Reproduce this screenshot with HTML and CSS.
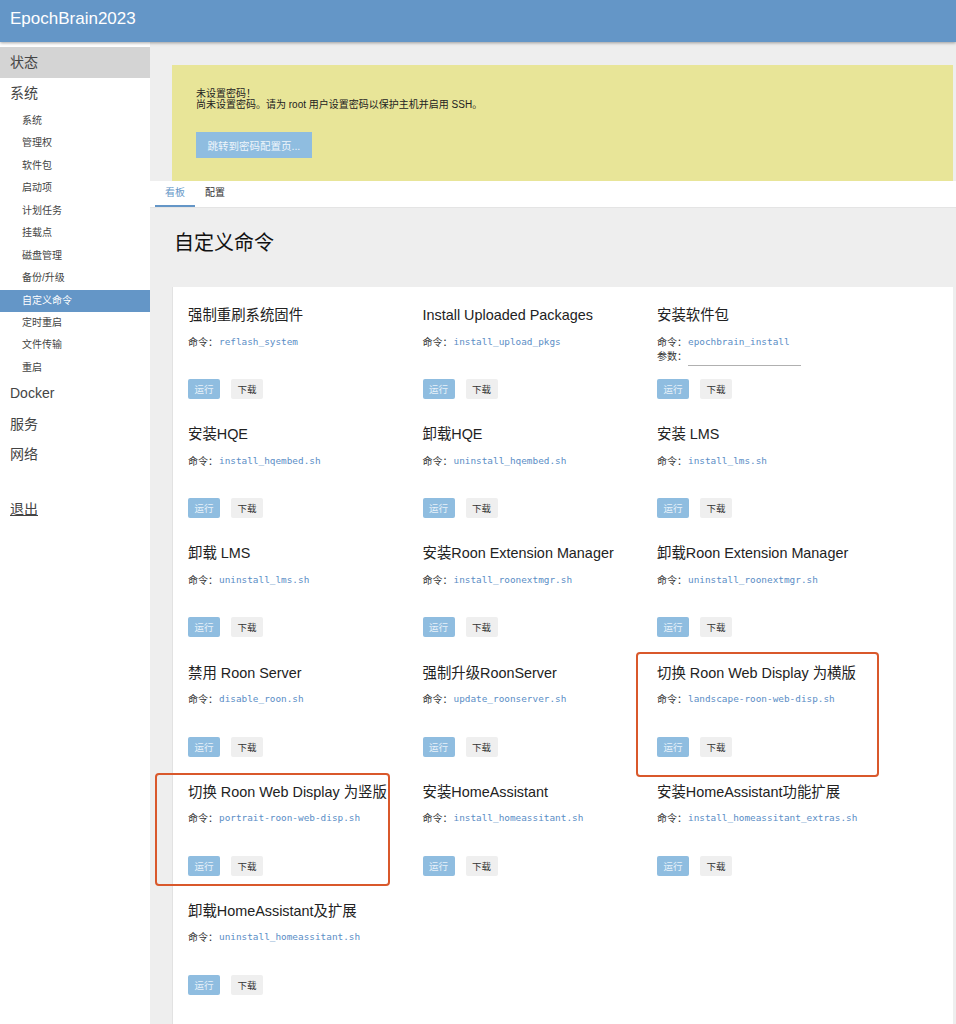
FILE: index.html
```html
<!DOCTYPE html>
<html lang="zh-CN">
<head>
    <meta charset="UTF-8">
    <meta name="viewport" content="width=device-width, initial-scale=1.0">
    <title>自定义命令 - EpochBrain2023</title>
    <link rel="stylesheet" href="styles.css">
</head>
<body>

    <header class="topbar">
        <span class="brand">EpochBrain2023</span>
    </header>

    <div class="layout">
        <nav class="sidebar">
            <a class="menu-top selected" href="#">状态</a>
            <a class="menu-top" href="#">系统</a>
            <ul class="submenu">
                <li><a href="#">系统</a></li>
                <li><a href="#">管理权</a></li>
                <li><a href="#">软件包</a></li>
                <li><a href="#">启动项</a></li>
                <li><a href="#">计划任务</a></li>
                <li><a href="#">挂载点</a></li>
                <li><a href="#">磁盘管理</a></li>
                <li><a href="#">备份/升级</a></li>
                <li class="active"><a href="#">自定义命令</a></li>
                <li><a href="#">定时重启</a></li>
                <li><a href="#">文件传输</a></li>
                <li><a href="#">重启</a></li>
            </ul>
            <a class="menu-top" href="#">Docker</a>
            <a class="menu-top" href="#">服务</a>
            <a class="menu-top" href="#">网络</a>
            <a class="menu-top logout" href="#">退出</a>
        </nav>

        <main class="content">
            <div class="alert">
                <p>未设置密码！<br>尚未设置密码。请为 root 用户设置密码以保护主机并启用 SSH。</p>
                <button class="btn-alert" type="button">跳转到密码配置页...</button>
            </div>

            <div class="tabs">
                <a class="tab current" href="#">看板</a>
                <a class="tab" href="#">配置</a>
            </div>

            <h2 class="page-title">自定义命令</h2>

            <div class="panel">
                <div class="commands">
                    <div class="command">
                        <h3>强制重刷系统固件</h3>
                        <p class="cmd-line"><span class="label">命令：</span><code>reflash_system</code></p>
                        <div class="actions"><button class="btn-run">运行</button><button class="btn-dl">下载</button></div>
                    </div>
                    <div class="command">
                        <h3>Install Uploaded Packages</h3>
                        <p class="cmd-line"><span class="label">命令：</span><code>install_upload_pkgs</code></p>
                        <div class="actions"><button class="btn-run">运行</button><button class="btn-dl">下载</button></div>
                    </div>
                    <div class="command">
                        <h3>安装软件包</h3>
                        <p class="cmd-line"><span class="label">命令：</span><code>epochbrain_install</code></p>
                        <p class="cmd-line"><span class="label">参数：</span><input class="arg" type="text"></p>
                        <div class="actions"><button class="btn-run">运行</button><button class="btn-dl">下载</button></div>
                    </div>

                    <div class="command">
                        <h3>安装HQE</h3>
                        <p class="cmd-line"><span class="label">命令：</span><code>install_hqembed.sh</code></p>
                        <div class="actions"><button class="btn-run">运行</button><button class="btn-dl">下载</button></div>
                    </div>
                    <div class="command">
                        <h3>卸载HQE</h3>
                        <p class="cmd-line"><span class="label">命令：</span><code>uninstall_hqembed.sh</code></p>
                        <div class="actions"><button class="btn-run">运行</button><button class="btn-dl">下载</button></div>
                    </div>
                    <div class="command">
                        <h3>安装 LMS</h3>
                        <p class="cmd-line"><span class="label">命令：</span><code>install_lms.sh</code></p>
                        <div class="actions"><button class="btn-run">运行</button><button class="btn-dl">下载</button></div>
                    </div>

                    <div class="command">
                        <h3>卸载 LMS</h3>
                        <p class="cmd-line"><span class="label">命令：</span><code>uninstall_lms.sh</code></p>
                        <div class="actions"><button class="btn-run">运行</button><button class="btn-dl">下载</button></div>
                    </div>
                    <div class="command">
                        <h3>安装Roon Extension Manager</h3>
                        <p class="cmd-line"><span class="label">命令：</span><code>install_roonextmgr.sh</code></p>
                        <div class="actions"><button class="btn-run">运行</button><button class="btn-dl">下载</button></div>
                    </div>
                    <div class="command">
                        <h3>卸载Roon Extension Manager</h3>
                        <p class="cmd-line"><span class="label">命令：</span><code>uninstall_roonextmgr.sh</code></p>
                        <div class="actions"><button class="btn-run">运行</button><button class="btn-dl">下载</button></div>
                    </div>

                    <div class="command">
                        <h3>禁用 Roon Server</h3>
                        <p class="cmd-line"><span class="label">命令：</span><code>disable_roon.sh</code></p>
                        <div class="actions"><button class="btn-run">运行</button><button class="btn-dl">下载</button></div>
                    </div>
                    <div class="command">
                        <h3>强制升级RoonServer</h3>
                        <p class="cmd-line"><span class="label">命令：</span><code>update_roonserver.sh</code></p>
                        <div class="actions"><button class="btn-run">运行</button><button class="btn-dl">下载</button></div>
                    </div>
                    <div class="command">
                        <h3>切换 Roon Web Display 为横版</h3>
                        <p class="cmd-line"><span class="label">命令：</span><code>landscape-roon-web-disp.sh</code></p>
                        <div class="actions"><button class="btn-run">运行</button><button class="btn-dl">下载</button></div>
                    </div>

                    <div class="command">
                        <h3>切换 Roon Web Display 为竖版</h3>
                        <p class="cmd-line"><span class="label">命令：</span><code>portrait-roon-web-disp.sh</code></p>
                        <div class="actions"><button class="btn-run">运行</button><button class="btn-dl">下载</button></div>
                    </div>
                    <div class="command">
                        <h3>安装HomeAssistant</h3>
                        <p class="cmd-line"><span class="label">命令：</span><code>install_homeassitant.sh</code></p>
                        <div class="actions"><button class="btn-run">运行</button><button class="btn-dl">下载</button></div>
                    </div>
                    <div class="command">
                        <h3>安装HomeAssistant功能扩展</h3>
                        <p class="cmd-line"><span class="label">命令：</span><code>install_homeassitant_extras.sh</code></p>
                        <div class="actions"><button class="btn-run">运行</button><button class="btn-dl">下载</button></div>
                    </div>

                    <div class="command">
                        <h3>卸载HomeAssistant及扩展</h3>
                        <p class="cmd-line"><span class="label">命令：</span><code>uninstall_homeassitant.sh</code></p>
                        <div class="actions"><button class="btn-run">运行</button><button class="btn-dl">下载</button></div>
                    </div>
                </div>

                <!-- annotation frames drawn over the screenshot -->
                <div class="mark mark-landscape"></div>
                <div class="mark mark-portrait"></div>
            </div>
        </main>
    </div>

</body>
</html>
```

FILE: styles.css
```css
/* General */
* {
    box-sizing: border-box;
}

body {
    margin: 0;
    font-family: "Liberation Sans", "Noto Sans CJK SC", sans-serif;
    color: #333;
    background: #eeeeee;
}

a {
    color: inherit;
    text-decoration: none;
}

button {
    font-family: inherit;
    border: none;
    cursor: pointer;
}

/* Header */
.topbar {
    position: relative;
    z-index: 2;
    height: 42px;
    padding-left: 10px;
    background: #6496c7;
    box-shadow: 0 1px 3px rgba(0, 0, 0, 0.35);
}

.brand {
    display: block;
    line-height: 38px;
    font-size: 17px;
    color: #fff;
}

.layout {
    display: flex;
    min-height: 982px;
}

/* Sidebar */
.sidebar {
    width: 150px;
    flex-shrink: 0;
    padding-top: 47px;
    margin-top: -42px;
    background: #fff;
}

.menu-top {
    display: block;
    height: 30.5px;
    line-height: 30.5px;
    padding-left: 10px;
    font-size: 14px;
    color: #444;
}

.menu-top.selected {
    background: #d4d4d4;
}

.menu-top.logout {
    margin-top: 24px;
    text-decoration: underline;
}

.submenu {
    list-style: none;
    margin: 0 0 -1px;
    padding: 2px 0 0;
}

.submenu a {
    display: block;
    height: 22.45px;
    line-height: 22.45px;
    padding-left: 22px;
    font-size: 10px;
    color: #444;
}

.submenu .active a {
    background: #6496c7;
    color: #fff;
}

/* Main content */
.content {
    flex: 1;
    min-width: 0;
    padding: 23px 3px 0 0;
}

.alert {
    margin-left: 22px;
    padding: 24px 24px 23px;
    background: #e8e598;
}

.alert p {
    margin: 0 0 22px;
    font-size: 10px;
    line-height: 10.5px;
    color: #222;
}

.btn-alert {
    height: 26px;
    padding: 0 11.5px;
    font-size: 10.5px;
    background: #8fbde0;
    color: #eef5fb;
}

/* Tabs */
.tabs {
    display: flex;
    height: 27px;
    margin-right: -3px;
    padding-left: 5px;
    background: #fff;
    border-bottom: 1px solid #e4e4e4;
}

.tab {
    height: 26px;
    line-height: 24px;
    padding: 0 10px;
    font-size: 10px;
    color: #333;
}

.tab.current {
    color: #6496c7;
    border-bottom: 2px solid #6496c7;
}

.page-title {
    margin: 21px 0 30px 24px;
    font-size: 20px;
    line-height: 28px;
    font-weight: normal;
    color: #111;
}

/* Command panel */
.panel {
    position: relative;
    margin-left: 22px;
    padding: 18px 16px 30px 15px;
    background: #fff;
    border-left: 1px solid #e2e2e2;
}

.commands {
    display: grid;
    grid-template-columns: repeat(3, 234.5px);
    row-gap: 25.2px;
}

.command {
    display: flex;
    flex-direction: column;
    height: 94px;
}

.command h3 {
    margin: 0 0 9px;
    font-size: 14.4px;
    line-height: 20px;
    font-weight: normal;
    color: #222;
    white-space: nowrap;
}

.cmd-line {
    display: flex;
    align-items: center;
    margin: 0;
    height: 14px;
    font-size: 10px;
    color: #333;
}

.cmd-line .label {
    width: 31px;
    flex-shrink: 0;
}

.cmd-line code {
    font-family: "DejaVu Sans Mono", monospace;
    font-size: 9.4px;
    color: #5b8ec6;
}

.arg {
    width: 113px;
    height: 18px;
    margin-top: 4px;
    padding: 0;
    border: none;
    border-bottom: 1px solid #b0b0b0;
    outline: none;
    background: transparent;
}

.actions {
    display: flex;
    gap: 11px;
    margin-top: auto;
}

.actions button {
    height: 20px;
    padding: 0 6.5px;
    font-size: 9.5px;
    border-radius: 2px;
}

.btn-run {
    background: #8fbde0;
    color: #e8f2fa;
}

.btn-dl {
    background: #efefef;
    color: #333;
}

/* Annotation frames */
.mark {
    position: absolute;
    border: 2px solid #d9582b;
    border-radius: 4px;
    pointer-events: none;
}

.mark-landscape {
    left: 463px;
    top: 365px;
    width: 243px;
    height: 125px;
}

.mark-portrait {
    left: -18px;
    top: 486px;
    width: 235px;
    height: 113px;
}
```
